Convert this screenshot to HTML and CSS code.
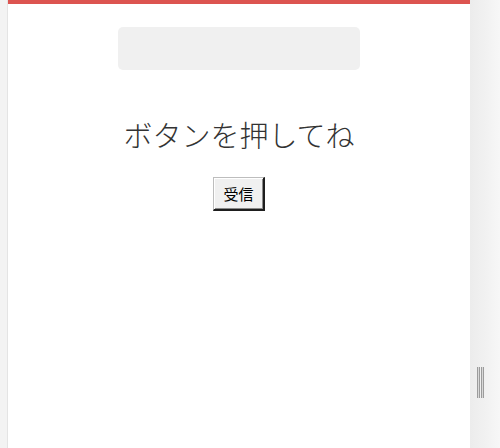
FILE: index.html
```html
<!DOCTYPE html>
<html>
<head>
    <meta charset="utf-8">
    <title>受信</title>
    <link rel="stylesheet" href="styles.css">
</head>
<body>
    <div class="frame">
        <div class="side-left"></div>
        <div class="main">
            <div class="message-box" id="messageBox"></div>
            <h1 class="prompt">ボタンを押してね</h1>
            <div class="actions">
                <button class="receive-button" id="receiveButton">受信</button>
            </div>
        </div>
        <div class="side-right">
            <div class="grip"></div>
        </div>
    </div>
</body>
</html>
```

FILE: styles.css
```css
html, body {
    margin: 0;
    padding: 0;
    height: 100%;
    background: #fff;
    font-family: "Noto Sans CJK JP", "Noto Sans", sans-serif;
    color: #333;
}

.frame {
    display: flex;
    height: 448px;
}

.side-left {
    width: 7px;
    background: #f3f3f3;
    border-right: 1px solid #e4e4e4;
}

.main {
    width: 462px;
    border-top: 4px solid #dc5450;
    display: flex;
    flex-direction: column;
    align-items: center;
}

.message-box {
    width: 242px;
    height: 43px;
    margin-top: 23px;
    background: #f0f0f0;
    border-radius: 5px;
}

.prompt {
    margin: 44px 0 0;
    font-size: 29px;
    font-weight: 300;
    line-height: 40px;
    color: #333;
}

.actions {
    margin-top: 23px;
}

.receive-button {
    width: 52px;
    height: 34px;
    padding: 0;
    font-family: "Noto Sans CJK JP", sans-serif;
    font-size: 15px;
    color: #000;
    background: #f0f0f0;
    border-style: solid;
    border-width: 1px 2px 2px 1px;
    border-color: #bdbdbd #1e1e1e #1e1e1e #bdbdbd;
    box-shadow: inset 1px 1px 0 #fff, inset -1px -1px 0 #8a8a8a;
    border-radius: 0;
}

.side-right {
    flex: 1;
    background: linear-gradient(90deg, #ececec 0%, #f1f1f1 50%, #f7f7f7 100%);
    position: relative;
}

.grip {
    position: absolute;
    left: 7px;
    top: 367px;
    width: 1px;
    height: 31px;
    background: #d8d8d8;
    border-left: 1px solid #9c9c9c;
    border-right: 1px solid #9c9c9c;
}

.grip::after {
    content: "";
    position: absolute;
    left: 3px;
    top: 0;
    width: 1px;
    height: 31px;
    background: #d8d8d8;
    border-left: 1px solid #9c9c9c;
    border-right: 1px solid #9c9c9c;
}
```
